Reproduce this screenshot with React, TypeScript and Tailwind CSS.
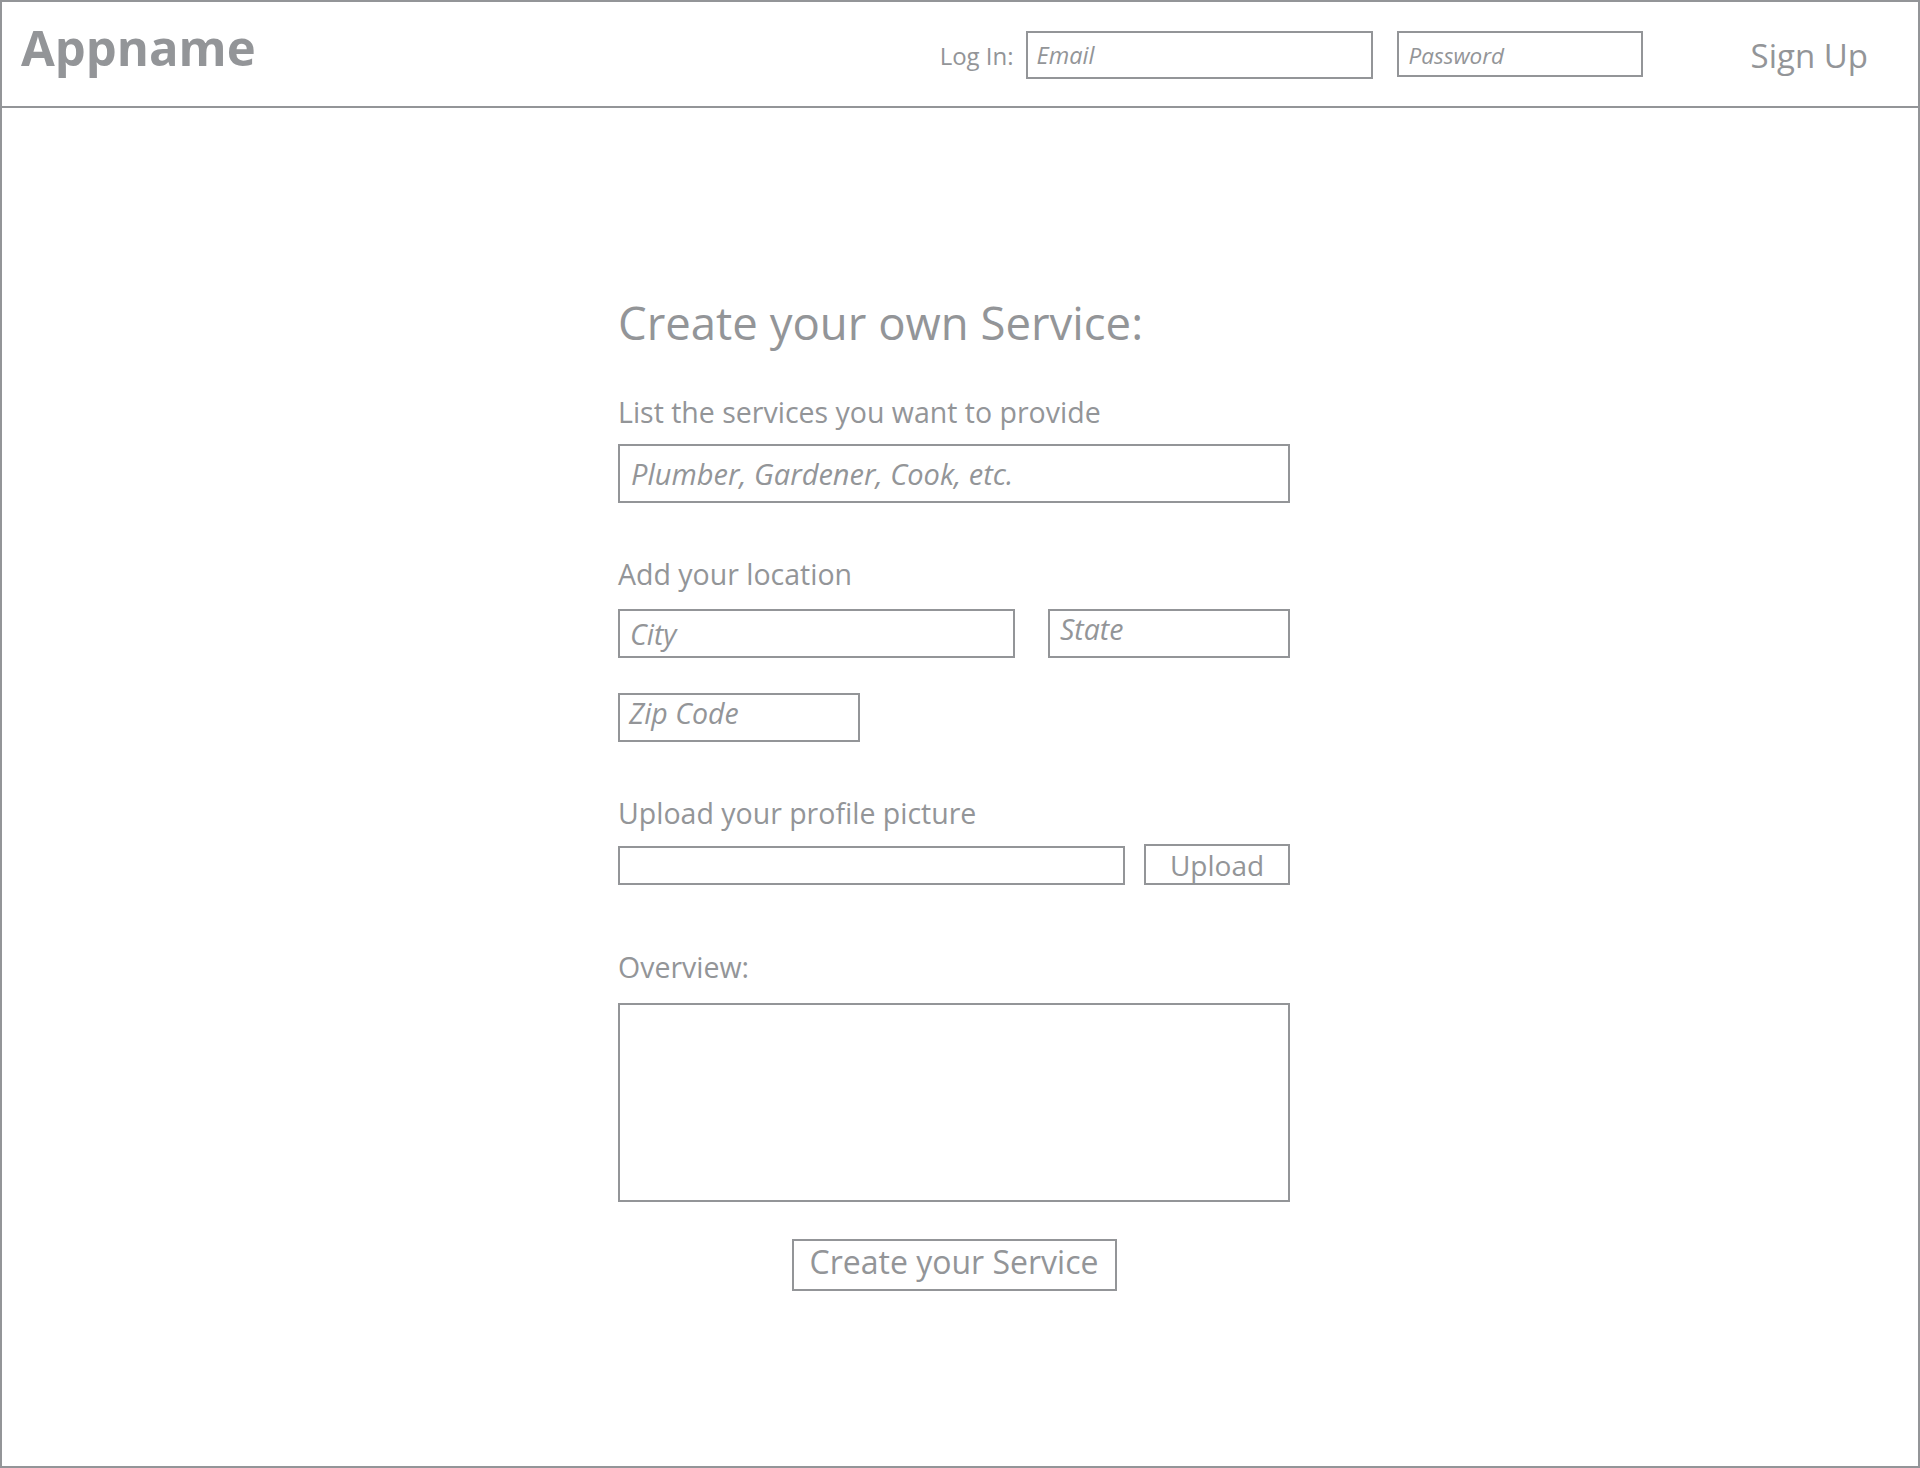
export default function App() {
  return (
    <div className="w-full h-[1468px] bg-white border-2 border-[#939598] flex flex-col text-[#939598] font-['Open_Sans','Noto_Sans',sans-serif]">
      {/* Top bar */}
      <header className="h-[106px] shrink-0 border-b-2 border-[#939598] flex items-start pl-[19px] pr-[50px]">
        <h1 className="mt-[21px] text-[49px] leading-none font-bold">Appname</h1>
        <div className="ml-auto flex items-start">
          <span className="mt-[42px] text-[24px] leading-none">Log In:</span>
          <div className="ml-[12px] mt-[29px] w-[347px] h-[48px] border-2 border-[#939598] pl-[9px] pt-[11px] text-[23.5px] leading-none italic">Email</div>
          <div className="ml-[24px] mt-[29px] w-[246px] h-[46px] border-2 border-[#939598] pl-[10px] pt-[12px] text-[22.5px] leading-none italic">Password</div>
          <button className="ml-[108px] mt-[37px] text-[33px] leading-none">Sign Up</button>
        </div>
      </header>

      {/* Form */}
      <main className="flex-1 pl-[616px]">
        <div className="w-[672px] flex flex-col">
          <h2 className="mt-[191px] text-[45.5px] leading-[46px]">Create your own Service:</h2>

          <label className="mt-[53px] text-[28.5px] leading-[29px]">List the services you want to provide</label>
          <div className="mt-[17px] h-[59px] border-2 border-[#939598] pl-[11px] pt-[13px] text-[29px] leading-none italic">Plumber, Gardener, Cook, etc.</div>

          <label className="mt-[57px] text-[28.5px] leading-[29px]">Add your location</label>
          <div className="mt-[20px] flex gap-[33px]">
            <div className="w-[397px] h-[49px] border-2 border-[#939598] pl-[10px] pt-[9px] text-[28.5px] leading-none italic">City</div>
            <div className="w-[242px] h-[49px] border-2 border-[#939598] pl-[10px] pt-[4px] text-[28.5px] leading-none italic">State</div>
          </div>
          <div className="mt-[35px] w-[242px] h-[49px] border-2 border-[#939598] pl-[9px] pt-[4px] text-[28.5px] leading-none italic">Zip Code</div>

          <label className="mt-[57px] text-[28.5px] leading-[29px]">Upload your profile picture</label>
          <div className="mt-[16px] flex items-end gap-[19px]">
            <div className="w-[507px] h-[39px] border-2 border-[#939598]"></div>
            <button className="w-[146px] h-[41px] border-2 border-[#939598] text-[28px] leading-none text-center">Upload</button>
          </div>

          <label className="mt-[68px] text-[28.5px] leading-[29px]">Overview:</label>
          <div className="mt-[21px] h-[199px] border-2 border-[#939598]"></div>

          <div className="mt-[37px] flex justify-center">
            <button className="w-[325px] h-[52px] border-2 border-[#939598] pb-[6px] text-[32px] leading-none">Create your Service</button>
          </div>
        </div>
      </main>
    </div>
  );
}
